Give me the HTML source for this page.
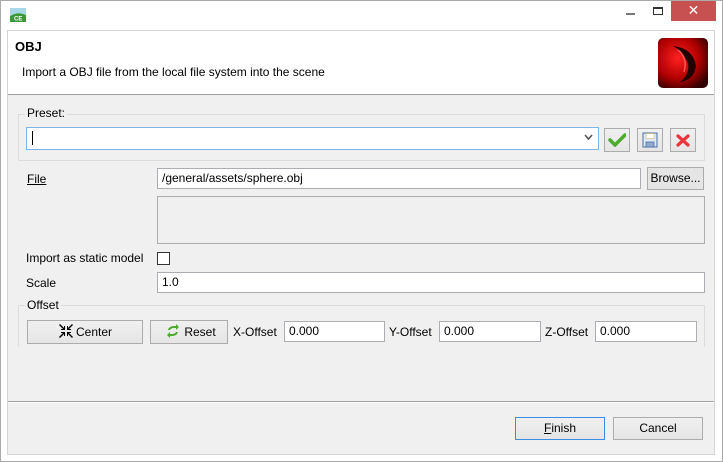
<!DOCTYPE html>
<html><head><meta charset="utf-8"><style>
*{box-sizing:border-box;margin:0;padding:0}
body{width:723px;height:462px;background:#fff;font-family:"Liberation Sans",sans-serif;font-size:12px;color:#000;position:relative;overflow:hidden}
.a{position:absolute}
.frame{left:0;top:0;width:723px;height:462px;border:1px solid #aaa;background:#fff}
.inner{left:7px;top:30px;width:708px;height:425px;background:#f0f0f0;border:1px solid #d4d4d4}
.hdr{left:8px;top:31px;width:706px;height:64px;background:#fff;border-bottom:1px solid #a0a0a0}
.inp{background:#fff;border:1px solid #abadb3;padding:2px 0 0 4px;height:21px;line-height:15px}
.btn{background:linear-gradient(#f0f0f0,#e5e5e5);border:1px solid #acacac;text-align:center;line-height:21px}
.grp{border:1px solid #dcdcdc}
.lbl{background:#f0f0f0;padding:0 2px}
</style></head><body>
<div class="a frame"></div>
<svg class="a" style="left:10px;top:8px" width="16" height="14" viewBox="0 0 16 14"><path d="M0 0h16v7Q8 3 0 8z" fill="#a8d8e8"/><path d="M0 8Q8 3 16 7v7H0z" fill="#3a9a3a"/><text x="4" y="12.5" font-size="6" fill="#fff" font-family="Liberation Sans" font-weight="bold">CE</text></svg>
<div class="a" style="left:626px;top:13px;width:9px;height:2px;background:#777"></div>
<div class="a" style="left:653px;top:7px;width:10px;height:8px;border:1px solid #333;border-top-width:2px"></div>
<div class="a" style="left:671px;top:1px;width:45px;height:20px;background:#c75050;color:#fff;text-align:center;font-size:14px;line-height:19px">✕</div>
<div class="a inner"></div>
<div class="a hdr"></div>
<div class="a" style="left:15px;top:39px;font-weight:bold;font-size:13px">OBJ</div>
<div class="a" style="left:22px;top:65px">Import a OBJ file from the local file system into the scene</div>
<svg class="a" style="left:658px;top:38px" width="50" height="50" viewBox="0 0 50 50"><defs><radialGradient id="g" cx="0.4" cy="0.4" r="0.7"><stop offset="0" stop-color="#ff2020"/><stop offset="0.6" stop-color="#b00000"/><stop offset="1" stop-color="#300000"/></radialGradient></defs><rect width="50" height="50" rx="5" fill="url(#g)"/><path d="M15 8Q35 10 38 28Q36 42 22 44Q32 36 30 26Q26 14 15 8z" fill="#200" /><path d="M20 12Q30 20 26 34" stroke="#f55" stroke-width="1.5" fill="none"/></svg>
<div class="a grp" style="left:18px;top:114px;width:687px;height:47px"></div>
<div class="a lbl" style="left:25px;top:106px">Preset:</div>
<div class="a inp" style="left:26px;top:127px;width:573px;height:23px;border-color:#7eb4ea"></div>
<div class="a" style="left:32px;top:131px;width:1px;height:14px;background:#000"></div>
<svg class="a" style="left:584px;top:134px" width="9" height="7" viewBox="0 0 9 7"><path d="M1 1l3.5 4 3.5-4" stroke="#555" stroke-width="1.6" fill="none"/></svg>
<div class="a btn" style="left:604px;top:128px;width:26px;height:24px"></div>
<svg class="a" style="left:608px;top:133px" width="18" height="14" viewBox="0 0 18 14"><path d="M2 7l5 5L17 2" stroke="#4caa30" stroke-width="3.5" fill="none" stroke-linecap="round"/></svg>
<div class="a btn" style="left:637px;top:128px;width:26px;height:24px"></div>
<svg class="a" style="left:642px;top:132px" width="16" height="16" viewBox="0 0 16 16"><rect x="1" y="1" width="14" height="14" fill="#dfe8f5" stroke="#4a6fa5"/><rect x="4" y="1.5" width="8" height="5" fill="#fff" stroke="#d9b86a" stroke-width="0.6"/><rect x="4" y="10" width="8" height="5" fill="#8fa8cc" stroke="#4a6fa5" stroke-width="0.8"/></svg>
<div class="a btn" style="left:670px;top:128px;width:26px;height:24px"></div>
<svg class="a" style="left:676px;top:134px" width="14" height="13" viewBox="0 0 14 13"><path d="M2 2l10 9M12 2L2 11" stroke="#e8363c" stroke-width="3.2" stroke-linecap="round"/></svg>
<div class="a" style="left:27px;top:172px;text-decoration:underline">File</div>
<div class="a inp" style="left:157px;top:168px;width:484px">/general/assets/sphere.obj</div>
<div class="a btn" style="left:647px;top:167px;width:57px;height:23px;background:#e5e5e5">Browse...</div>
<div class="a" style="left:157px;top:196px;width:548px;height:48px;border:1px solid #adadad;background:#f0f0f0"></div>
<div class="a" style="left:26px;top:251px">Import as static model</div>
<div class="a" style="left:157px;top:252px;width:13px;height:13px;border:1px solid #333;background:#fff"></div>
<div class="a" style="left:26px;top:276px">Scale</div>
<div class="a inp" style="left:157px;top:272px;width:548px">1.0</div>
<div class="a" style="left:18px;top:305px;width:687px;height:42px;border-top:1px solid #dcdcdc;border-left:1px solid #dcdcdc;border-right:1px solid #dcdcdc"></div>
<div class="a lbl" style="left:25px;top:298px">Offset</div>
<div class="a btn" style="left:27px;top:320px;width:116px;height:24px;line-height:22px;padding-left:18px">Center</div>
<svg class="a" style="left:59px;top:324px" width="14" height="14" viewBox="0 0 14 14" fill="#000"><path d="M0 1l1-1 4 4V2h1v4H2V5h2zM14 1l-1-1-4 4V2H8v4h4V5h-2zM0 13l1 1 4-4v2h1V8H2v1h2zM14 13l-1 1-4-4v2H8V8h4v1h-2z"/></svg>
<div class="a btn" style="left:150px;top:320px;width:78px;height:24px;line-height:22px;padding-left:22px">Reset</div>
<svg class="a" style="left:166px;top:324px" width="14" height="14" viewBox="0 0 14 14"><path d="M2 6Q3 2 8 2h2V0l3 3-3 3V4H8Q5 4 4 6z" fill="#4caa30"/><path d="M12 8Q11 12 6 12H4v2L1 11l3-3v2h2q3 0 4-2z" fill="#4caa30"/></svg>
<div class="a" style="left:233px;top:325px">X-Offset</div>
<div class="a inp" style="left:284px;top:321px;width:101px">0.000</div>
<div class="a" style="left:389px;top:325px">Y-Offset</div>
<div class="a inp" style="left:439px;top:321px;width:102px">0.000</div>
<div class="a" style="left:545px;top:325px">Z-Offset</div>
<div class="a inp" style="left:595px;top:321px;width:102px">0.000</div>
<div class="a" style="left:8px;top:401px;width:706px;height:1px;background:#a0a0a0"></div>
<div class="a" style="left:8px;top:402px;width:706px;height:1px;background:#fff"></div>
<div class="a btn" style="left:515px;top:417px;width:90px;height:23px;border-color:#3c8ce6"><u>F</u>inish</div>
<div class="a btn" style="left:613px;top:417px;width:90px;height:23px">Cancel</div>
</body></html>
